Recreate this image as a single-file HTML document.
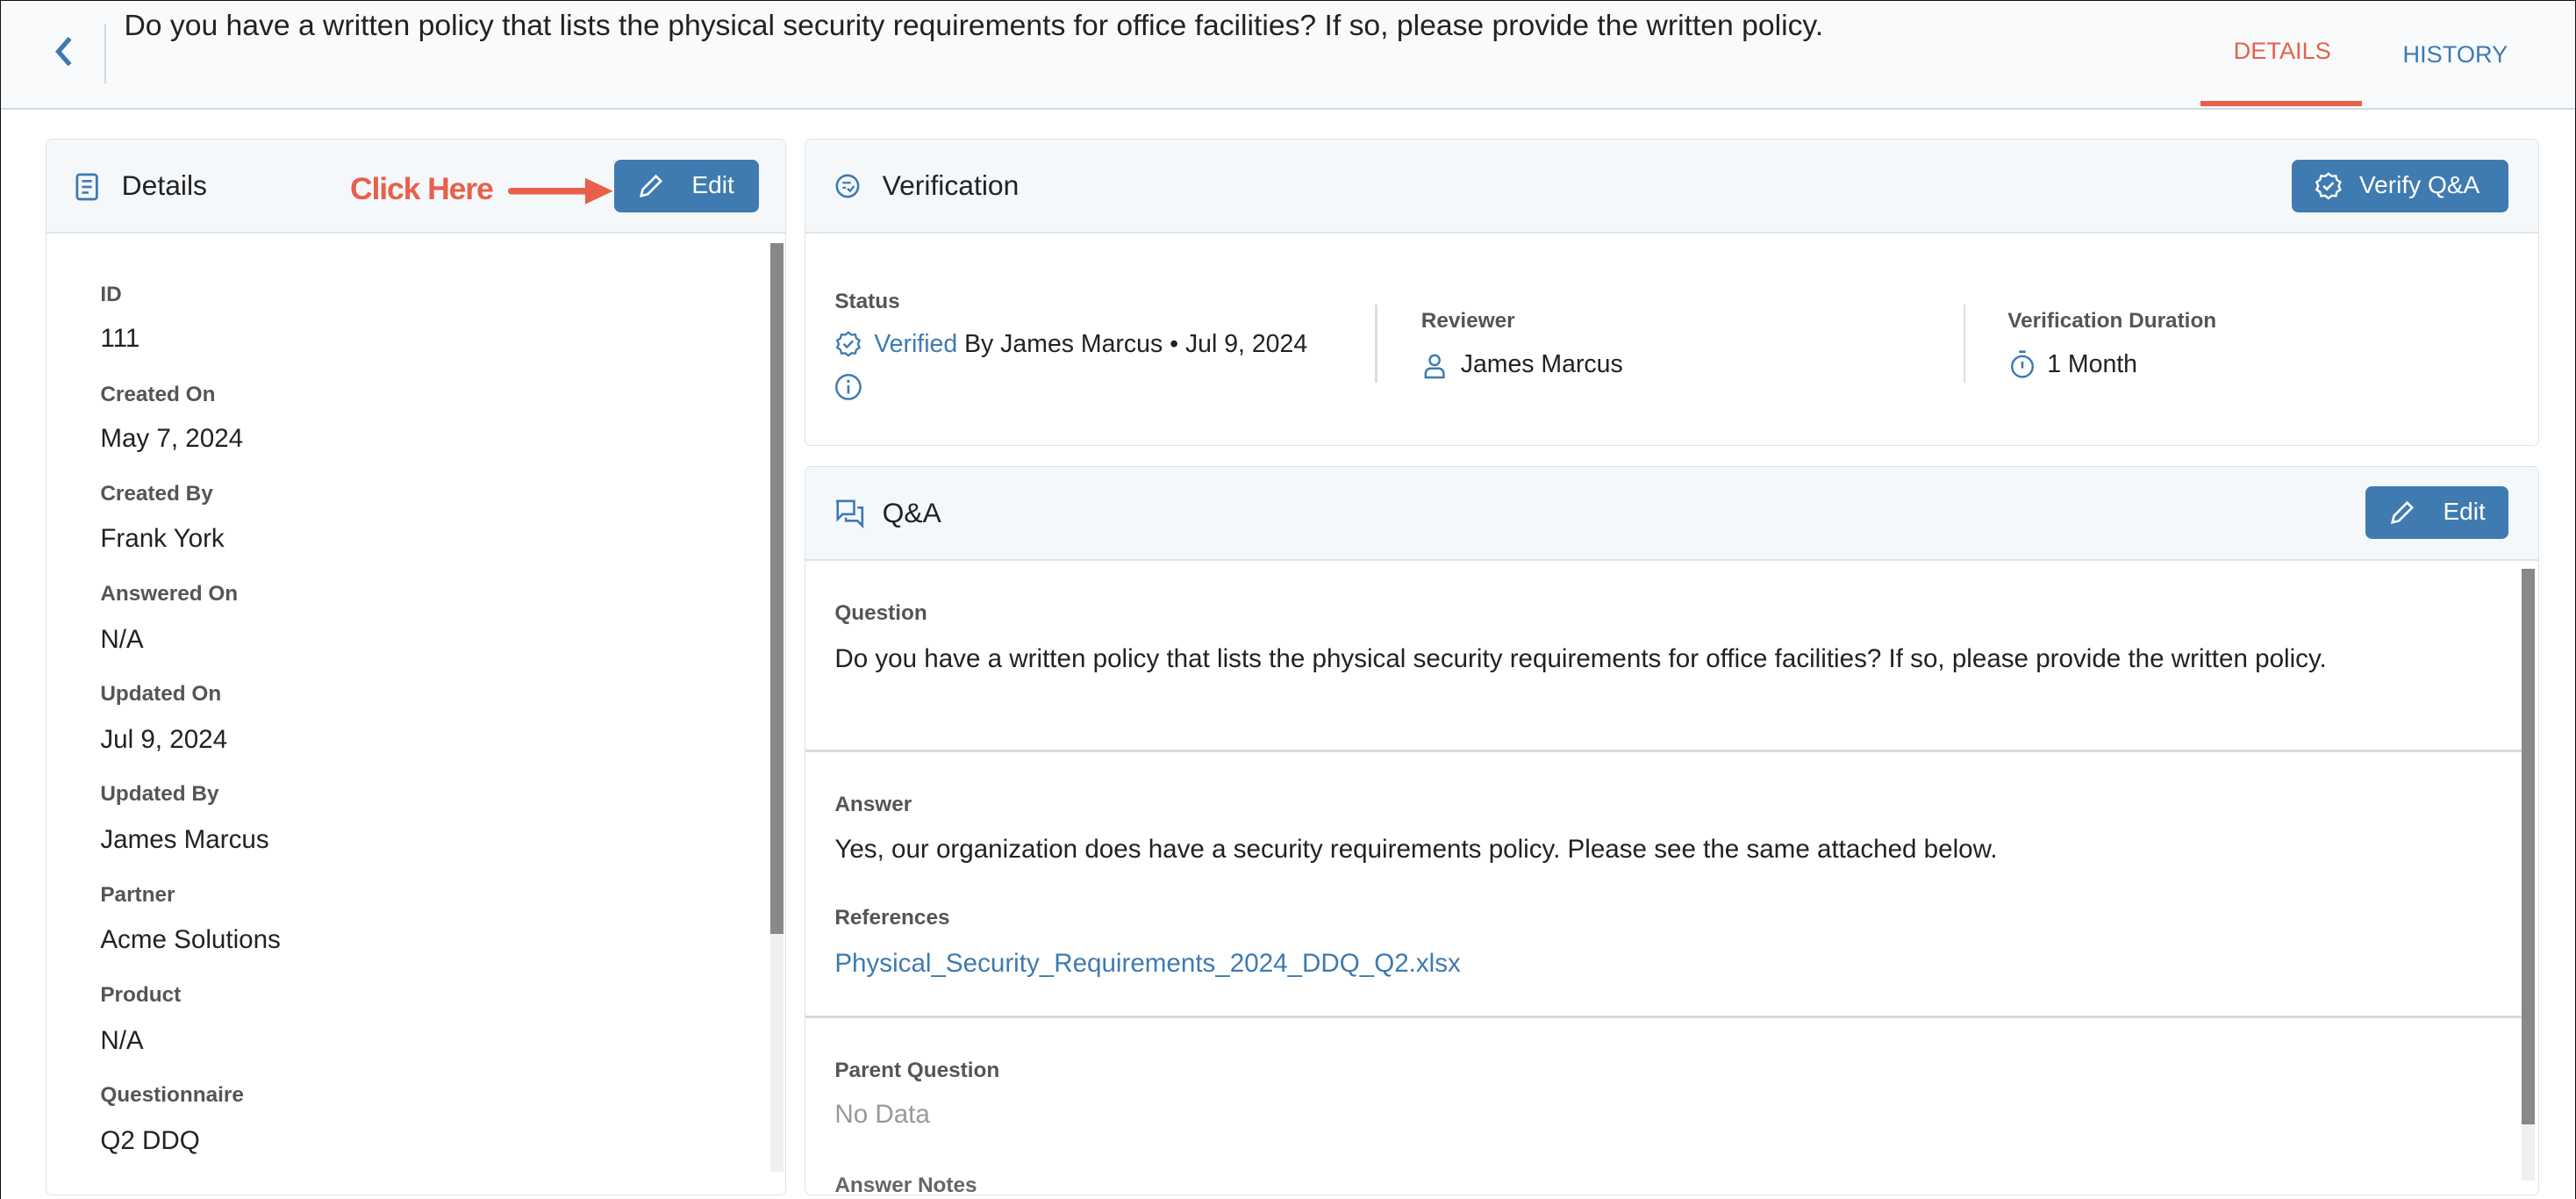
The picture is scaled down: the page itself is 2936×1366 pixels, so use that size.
<!DOCTYPE html>
<html><head><meta charset="utf-8"><style>
*{box-sizing:border-box;margin:0;padding:0}
html,body{width:2936px;height:1366px;overflow:hidden;background:#fff}
#w{zoom:1.87245;width:1568px;height:730px;position:relative;font-family:"Liberation Sans",sans-serif;color:#222;border:1px solid #111;overflow:hidden}
.a{position:absolute;white-space:nowrap}
.top{position:absolute;left:-1px;top:-1px;width:1568px;height:67px;background:#f8fafc;border-bottom:1.5px solid #d3dbe0}
.card{position:absolute;border:1px solid #dde2e6;border-radius:4px;background:#fff;overflow:hidden}
.hd{position:absolute;left:0;top:0;right:0;height:57px;background:#f5f8fb;border-bottom:1.5px solid #dfe3e6}
.btn{position:absolute;background:#3f7bb0;border-radius:4px;color:#fff;font-size:15px}
.lb{font-size:13px;font-weight:bold;color:#555}
.v{font-size:15.8px;color:#222}
.ht{font-size:17px;color:#222}
</style></head><body><div id="w">
<div class="top">
<svg class="a" style="left:32px;top:22px" width="14" height="20" viewBox="0 0 14 20"><path d="M11 2 L4 10 L11 18" stroke="#3e7ab0" stroke-width="2.8" fill="none"/></svg>
<div class="a" style="left:64px;top:15px;width:1px;height:36px;background:#d5d9dc"></div>
<div class="a" style="left:76px;top:6px;font-size:18px;color:#222">Do you have a written policy that lists the physical security requirements for office facilities? If so, please provide the written policy.</div>
<div class="a" style="left:1360px;top:23px;font-size:14.5px;color:#e8604a">DETAILS</div>
<div class="a" style="left:1340px;top:62px;width:98px;height:3px;background:#e8604a"></div>
<div class="a" style="left:1463px;top:25px;font-size:14.5px;color:#3e7ab0">HISTORY</div>
</div>

<div class="card" style="left:27px;top:84px;width:451px;height:643px">
<div class="hd">
<svg class="a" style="left:18px;top:20px" width="14" height="17" viewBox="0 0 14 17"><rect x="1" y="1" width="12" height="15" rx="1.5" stroke="#3e7ab0" stroke-width="1.5" fill="none"/><path d="M4 5h6M4 8.5h6M4 12h4" stroke="#3e7ab0" stroke-width="1.4"/></svg>
<div class="a ht" style="left:46px;top:18px">Details</div>
<div class="a" style="left:185px;top:19px;font-size:19px;font-weight:bold;color:#e8604a;letter-spacing:-0.6px">Click Here</div>
<svg class="a" style="left:280px;top:21px" width="66" height="20" viewBox="0 0 66 20"><path d="M3 10 H52" stroke="#e8604a" stroke-width="4" stroke-linecap="round"/><path d="M48 2 L65 10 L48 18 Z" fill="#e8604a"/></svg>
<div class="btn" style="left:346px;top:12px;width:88px;height:32px"><svg class="a" style="left:14px;top:8px" width="16" height="16" viewBox="0 0 16 16"><path d="M2 14 L3 10 L11 2 L14 5 L6 13 Z" stroke="#fff" stroke-width="1.4" fill="none"/></svg><span class="a" style="left:47px;top:7px">Edit</span></div>
</div>
<div class="a lb" style="left:33px;top:87px">ID</div><div class="a v" style="left:33px;top:112px">111</div>
<div class="a lb" style="left:33px;top:148px">Created On</div><div class="a v" style="left:33px;top:173px">May 7, 2024</div>
<div class="a lb" style="left:33px;top:208px">Created By</div><div class="a v" style="left:33px;top:234px">Frank York</div>
<div class="a lb" style="left:33px;top:269px">Answered On</div><div class="a v" style="left:33px;top:295px">N/A</div>
<div class="a lb" style="left:33px;top:330px">Updated On</div><div class="a v" style="left:33px;top:356px">Jul 9, 2024</div>
<div class="a lb" style="left:33px;top:391px">Updated By</div><div class="a v" style="left:33px;top:417px">James Marcus</div>
<div class="a lb" style="left:33px;top:452px">Partner</div><div class="a v" style="left:33px;top:478px">Acme Solutions</div>
<div class="a lb" style="left:33px;top:513px">Product</div><div class="a v" style="left:33px;top:539px">N/A</div>
<div class="a lb" style="left:33px;top:574px">Questionnaire</div><div class="a v" style="left:33px;top:600px">Q2 DDQ</div>
<div class="a" style="left:441px;top:63px;width:8px;height:565px;background:#f0f0f0"></div>
<div class="a" style="left:441px;top:63px;width:8px;height:420px;background:#888"></div>
</div>

<div class="card" style="left:489px;top:84px;width:1056px;height:187px">
<div class="hd">
<svg class="a" style="left:18px;top:20px" width="16" height="16" viewBox="0 0 16 16"><circle cx="8" cy="8" r="6.5" stroke="#3e7ab0" stroke-width="1.4" fill="none"/><path d="M5 6h5M5 9h2M8 9.5l1.5 1.5 2.5-3" stroke="#3e7ab0" stroke-width="1.2" fill="none"/></svg>
<div class="a ht" style="left:47px;top:18px">Verification</div>
<div class="btn" style="left:905px;top:12px;width:132px;height:32px"><svg class="a" style="left:13px;top:7px" width="18" height="18" viewBox="0 0 18 18"><path d="M9 1.5l2 1.6 2.5-.2.6 2.4 2.1 1.4-1 2.3 1 2.3-2.1 1.4-.6 2.4-2.5-.2-2 1.6-2-1.6-2.5.2-.6-2.4L1.8 11.3l1-2.3-1-2.3 2.1-1.4.6-2.4 2.5.2z" stroke="#fff" stroke-width="1.3" fill="none"/><path d="M6 9l2 2 4-4" stroke="#fff" stroke-width="1.4" fill="none"/></svg><span class="a" style="left:41px;top:7px">Verify Q&amp;A</span></div>
</div>
<div class="a lb" style="left:18px;top:91px">Status</div>
<svg class="a" style="left:18px;top:116px" width="17" height="17" viewBox="0 0 18 18"><path d="M9 1.5l2 1.6 2.5-.2.6 2.4 2.1 1.4-1 2.3 1 2.3-2.1 1.4-.6 2.4-2.5-.2-2 1.6-2-1.6-2.5.2-.6-2.4L1.8 11.3l1-2.3-1-2.3 2.1-1.4.6-2.4 2.5.2z" stroke="#3e7ab0" stroke-width="1.3" fill="none"/><path d="M6 9l2 2 4-4" stroke="#3e7ab0" stroke-width="1.4" fill="none"/></svg>
<div class="a" style="left:42px;top:116px;font-size:15.2px"><span style="color:#3e7ab0">Verified</span> By James Marcus • Jul 9, 2024</div>
<svg class="a" style="left:18px;top:142px" width="17" height="17" viewBox="0 0 17 17"><circle cx="8.5" cy="8.5" r="7.3" stroke="#3e7ab0" stroke-width="1.3" fill="none"/><path d="M8.5 7.5v5" stroke="#3e7ab0" stroke-width="1.4"/><circle cx="8.5" cy="5" r=".9" fill="#3e7ab0"/></svg>
<div class="a" style="left:347px;top:100px;width:1.5px;height:48px;background:#ddd"></div>
<div class="a lb" style="left:375px;top:103px">Reviewer</div>
<svg class="a" style="left:376px;top:129px" width="14" height="17" viewBox="0 0 14 17"><circle cx="7" cy="5" r="3" stroke="#3e7ab0" stroke-width="1.3" fill="none"/><path d="M1.5 15.5v-2.5a3 3 0 0 1 3-3h5a3 3 0 0 1 3 3v2.5z" stroke="#3e7ab0" stroke-width="1.3" fill="none"/></svg>
<div class="a" style="left:399px;top:128px;font-size:15.2px">James Marcus</div>
<div class="a" style="left:705px;top:100px;width:1.5px;height:48px;background:#ddd"></div>
<div class="a lb" style="left:732px;top:103px">Verification Duration</div>
<svg class="a" style="left:733px;top:127px" width="16" height="19" viewBox="0 0 16 19"><circle cx="8" cy="11" r="6.3" stroke="#3e7ab0" stroke-width="1.3" fill="none"/><path d="M8 8v4M6 2h4" stroke="#3e7ab0" stroke-width="1.4"/></svg>
<div class="a" style="left:756px;top:128px;font-size:15.2px">1 Month</div>
</div>

<div class="card" style="left:489px;top:283px;width:1056px;height:444px">
<div class="hd">
<svg class="a" style="left:18px;top:20px" width="18" height="18" viewBox="0 0 18 18"><path d="M1 1h11v8H5l-3 3V1z" stroke="#3e7ab0" stroke-width="1.4" fill="none"/><path d="M14 5h3v11l-3-3H7v-2" stroke="#3e7ab0" stroke-width="1.4" fill="none"/></svg>
<div class="a ht" style="left:47px;top:18px">Q&amp;A</div>
<div class="btn" style="left:950px;top:12px;width:87px;height:32px"><svg class="a" style="left:14px;top:8px" width="16" height="16" viewBox="0 0 16 16"><path d="M2 14 L3 10 L11 2 L14 5 L6 13 Z" stroke="#fff" stroke-width="1.4" fill="none"/></svg><span class="a" style="left:47px;top:7px">Edit</span></div>
</div>
<div class="a lb" style="left:18px;top:82px">Question</div>
<div class="a v" style="left:18px;top:108px">Do you have a written policy that lists the physical security requirements for office facilities? If so, please provide the written policy.</div>
<div class="a" style="left:0;top:172px;width:1046px;height:1.5px;background:#d6dcde"></div>
<div class="a lb" style="left:18px;top:198px">Answer</div>
<div class="a v" style="left:18px;top:224px">Yes, our organization does have a security requirements policy. Please see the same attached below.</div>
<div class="a lb" style="left:18px;top:267px">References</div>
<div class="a" style="left:18px;top:293px;font-size:15.8px;color:#3e7ab0">Physical_Security_Requirements_2024_DDQ_Q2.xlsx</div>
<div class="a" style="left:0;top:334px;width:1046px;height:1.5px;background:#d6dcde"></div>
<div class="a lb" style="left:18px;top:360px">Parent Question</div>
<div class="a v" style="left:18px;top:385px;color:#999">No Data</div>
<div class="a lb" style="left:18px;top:430px;color:#666">Answer Notes</div>
<div class="a" style="left:1045px;top:62px;width:8px;height:372px;background:#f0f0f0"></div>
<div class="a" style="left:1045px;top:62px;width:8px;height:338px;background:#888"></div>
</div>
</div></body></html>
